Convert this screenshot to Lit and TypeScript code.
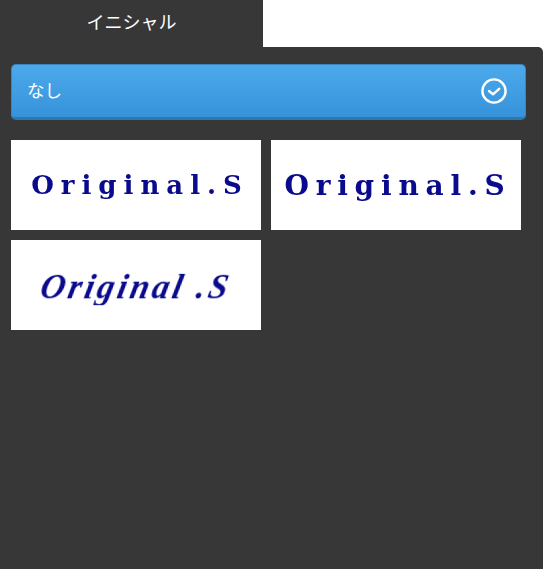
import { LitElement, html, css } from "lit";
import { customElement } from "lit/decorators.js";

@customElement("app-root")
export class AppRoot extends LitElement {
  static styles = css`
    :host {
      display: block;
      width: 543px;
      height: 569px;
      background: #fff;
      font-family: "Noto Sans CJK JP", "Liberation Sans", sans-serif;
      overflow: hidden;
    }
    .tabs { display: flex; height: 47px; }
    .tab {
      width: 263px;
      background: #373737;
      color: #fff;
      font-size: 18px;
      line-height: 42px;
      text-align: center;
      font-weight: 400;
    }
    .panel {
      height: 522px;
      box-sizing: border-box;
      background: #373737;
      border-top-right-radius: 5px;
      padding: 17px 17px 0 11px;
    }
    .select {
      height: 56px;
      box-sizing: border-box;
      display: flex;
      align-items: center;
      justify-content: space-between;
      padding: 0 18px 0 15px;
      color: #fff;
      font-size: 17.5px;
      font-weight: 400;
      line-height: 24px;
      border: 1px solid #3a85bf;
      border-bottom: 3px solid #2f78ae;
      border-radius: 5px;
      background: linear-gradient(#4ca9eb, #3693da);
    }
    .label { margin-top: -2px; }
    .select svg { display: block; }
    .grid {
      display: grid;
      grid-template-columns: 250px 250px;
      grid-auto-rows: 90px;
      gap: 10px;
      margin-top: 20px;
    }
    .sample {
      background: #fff;
      display: flex;
      align-items: center;
      justify-content: center;
      color: #0a0a8c;
      font-family: "DejaVu Serif", serif;
      font-weight: 700;
      white-space: nowrap;
    }
    .sample span { filter: blur(0.35px); }
    .gothic { font-size: 26px; letter-spacing: 7px; padding-left: 8px; }
    .slab { font-size: 28px; letter-spacing: 6.8px; padding-left: 4px; }
    .script {
      font-family: "Liberation Serif", serif;
      font-size: 34px;
      font-style: italic;
      letter-spacing: 3.2px;
    }
    .script span { transform: skewX(-12deg); margin-top: 3px; }
  `;

  render() {
    return html`
      <div class="tabs"><div class="tab">イニシャル</div></div>
      <div class="panel">
        <div class="select">
          <span class="label">なし</span>
          <svg width="26" height="26" viewBox="0 0 26 26" fill="none" stroke="#fff" stroke-width="2.4">
            <circle cx="13" cy="13" r="11.6"></circle>
            <path d="M8 13 L12 16.3 L18.2 10.8" stroke-linecap="round" stroke-linejoin="round"></path>
          </svg>
        </div>
        <div class="grid">
          <div class="sample gothic"><span>Original.S</span></div>
          <div class="sample slab"><span>Original.S</span></div>
          <div class="sample script"><span>Original .S</span></div>
        </div>
      </div>
    `;
  }
}
